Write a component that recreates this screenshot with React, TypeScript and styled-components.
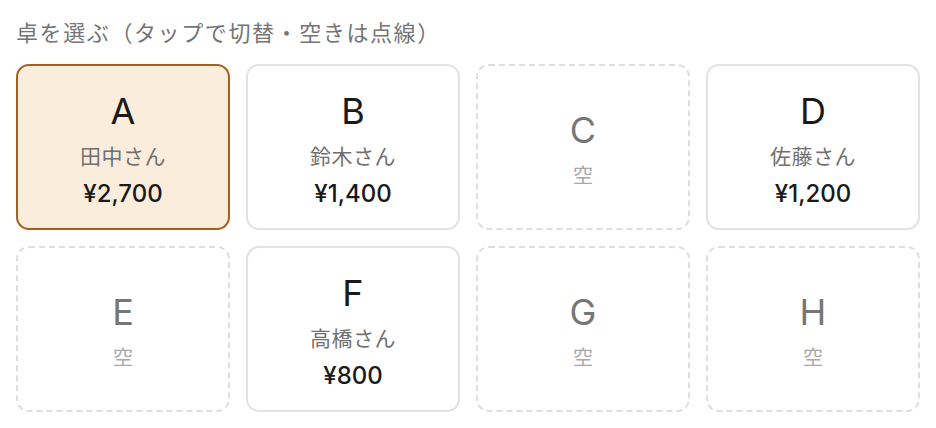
import React from "react"
import styled, { createGlobalStyle, css } from "styled-components"

interface Table {
  id: string
  guest?: string
  total?: number
}

const tables: Table[] = [
  { id: "A", guest: "田中さん", total: 2700 },
  { id: "B", guest: "鈴木さん", total: 1400 },
  { id: "C" },
  { id: "D", guest: "佐藤さん", total: 1200 },
  { id: "E" },
  { id: "F", guest: "高橋さん", total: 800 },
  { id: "G" },
  { id: "H" }
]

const yen = (n: number) => "¥" + n.toLocaleString("ja-JP")

const GlobalStyle = createGlobalStyle`
  * { box-sizing: border-box; }
  body {
    margin: 0;
    background: #ffffff;
    font-family: Inter, "Noto Sans CJK JP", sans-serif;
  }
`

const Page = styled.div`
  padding: 16px 16px;
`

const Heading = styled.h2`
  margin: 0 0 14px;
  font-size: 22px;
  line-height: 34px;
  font-weight: 400;
  color: #747474;
  letter-spacing: 1.6px;
`

const Grid = styled.div`
  display: grid;
  grid-template-columns: repeat(4, 214px);
  grid-auto-rows: 166px;
  gap: 16px;
`

const Card = styled.button<{ $active: boolean; $empty: boolean }>`
  display: flex;
  flex-direction: column;
  align-items: center;
  justify-content: center;
  padding: 5px 0 0;
  border-radius: 13px;
  border: 2px solid #e2e2e2;
  background: #ffffff;
  font-family: inherit;
  cursor: pointer;

  ${p => p.$empty && css`
    border-style: dashed;
    border-color: #dedede;
  `}

  ${p => p.$active && css`
    background: #fbeddb;
    border-color: #a2621c;
  `}
`

const Letter = styled.div<{ $empty: boolean }>`
  font-size: 36px;
  line-height: 40px;
  font-weight: 400;
  color: ${p => (p.$empty ? "#767676" : "#1a1a1a")};
`

const Guest = styled.div`
  margin-top: 13px;
  font-size: 21px;
  line-height: 26px;
  letter-spacing: 0.5px;
  color: #707070;
`

const Vacant = styled.div`
  margin-top: 13px;
  font-size: 20px;
  line-height: 26px;
  color: #a8a8a8;
`

const Total = styled.div`
  margin-top: 9px;
  font-size: 24px;
  line-height: 30px;
  font-weight: 500;
  color: #1a1a1a;
`

export default function App() {
  const [selected, setSelected] = React.useState("A")

  return <>
    <GlobalStyle />
    <Page>
      <Heading>卓を選ぶ（タップで切替・空きは点線）</Heading>
      <Grid>
        {tables.map(t => {
          const empty = !t.guest
          return (
            <Card key={t.id} type="button"
                  $active={selected === t.id} $empty={empty}
                  onClick={() => setSelected(t.id)}>
              <Letter $empty={empty}>{t.id}</Letter>
              {empty
                ? <Vacant>空</Vacant>
                : <>
                  <Guest>{t.guest}</Guest>
                  <Total>{yen(t.total ?? 0)}</Total>
                </>}
            </Card>
          )
        })}
      </Grid>
    </Page>
  </>
}
